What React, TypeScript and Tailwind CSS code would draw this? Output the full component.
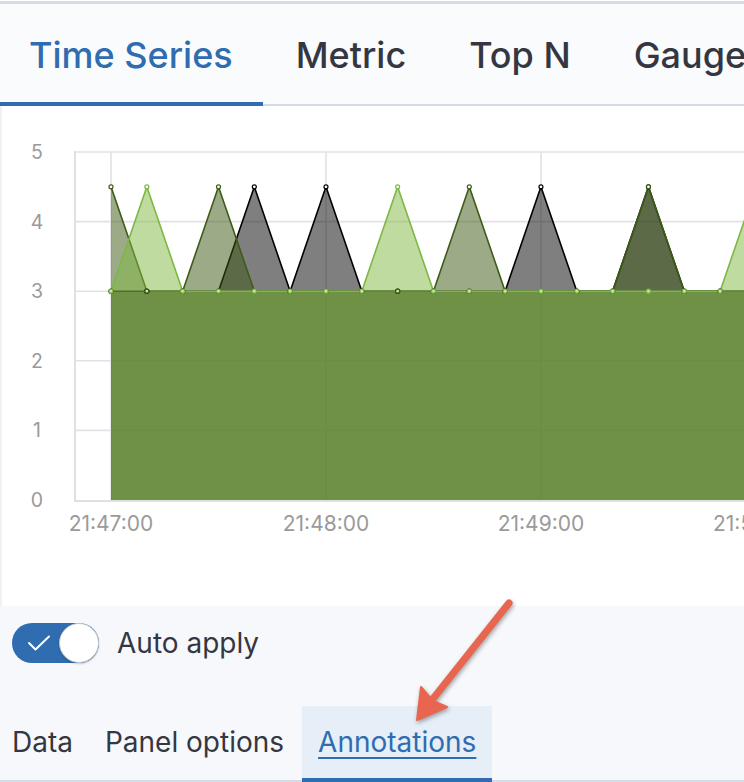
import React from "react";

const X0 = 111;
const STEP = 35.83;
const yv = (v: number) => 500 - v * 69.6;

type Series = { stroke: string; fill: string; peaks: number[] };

// drawn in this order, last on top
const series: Series[] = [
    { stroke: "#000000", fill: "#000000", peaks: [4, 6, 12, 15] },
    { stroke: "#3d5c16", fill: "#395511", peaks: [0, 3, 10, 15] },
    { stroke: "#7cb843", fill: "#7fb841", peaks: [1, 8, 18] },
];

const COUNT = 20;

const pts = (s: Series) =>
    Array.from({ length: COUNT }, (_, i) => ({
        x: X0 + i * STEP,
        y: yv(s.peaks.includes(i) ? 4.5 : 3),
        peak: s.peaks.includes(i),
    }));

const Chart = () => {
    const xTicks = [
        { x: 111, label: "21:47:00" },
        { x: 326, label: "21:48:00" },
        { x: 541, label: "21:49:00" },
        { x: 756, label: "21:50:00" },
    ];
    return (
        <svg width="742" height="500" viewBox="2 106 742 500" className="block">
            {/* grid */}
            {[5, 4, 3, 2, 1].map((v) => (
                <line key={v} x1={75} x2={800} y1={yv(v)} y2={yv(v)} stroke="#e1e2e8" strokeWidth={1.6} />
            ))}
            {xTicks.map((t) => (
                <line key={t.x} x1={t.x} x2={t.x} y1={152} y2={500} stroke="#e1e2e8" strokeWidth={1.6} />
            ))}
            <line x1={75} x2={75} y1={151} y2={501} stroke="#dfe0e6" strokeWidth={2} />
            <line x1={74} x2={800} y1={501} y2={501} stroke="#dfe0e6" strokeWidth={2} />

            {/* series areas */}
            {series.map((s, k) => {
                const p = pts(s);
                const line = p.map((q) => `${q.x},${q.y}`).join(" ");
                const area = `${X0},500 ${line} ${p[p.length - 1].x},500`;
                return (
                    <g key={k}>
                        <polygon points={area} fill={s.fill} fillOpacity={0.5} />
                        <polyline points={line} fill="none" stroke={s.stroke} strokeWidth={1.6} strokeLinejoin="round" />
                    </g>
                );
            })}
            {series.map((s, k) => (
                <g key={`d${k}`}>
                    {pts(s).map((q, i) => (
                        <circle key={i} cx={q.x} cy={q.y} r={2} fill={q.peak ? "#ffffff" : "#c9e3a8"} stroke={s.stroke} strokeWidth={1.2} />
                    ))}
                </g>
            ))}

            {/* labels */}
            {[5, 4, 3, 2, 1, 0].map((v) => (
                <text key={v} x={37} y={yv(v) + 7} textAnchor="middle" fontSize={19.5} fill="#9a9a9a" fontFamily="Inter, sans-serif">
                    {v}
                </text>
            ))}
            {xTicks.map((t) => (
                <text key={t.x} x={t.x} y={531} textAnchor="middle" fontSize={21} fill="#9a9a9a" fontFamily="Inter, sans-serif">
                    {t.label}
                </text>
            ))}
        </svg>
    );
};

export default function App() {
    const topTabs = ["Time Series", "Metric", "Top N", "Gauge"];
    return (
        <div className="relative w-[744px] h-[782px] overflow-hidden bg-white font-['Inter',sans-serif]">
            <div className="h-px bg-white" />
            {/* visualization type tabs */}
            <div className="flex gap-[3px] h-[105px] border-t-[3px] border-b-2 border-[#d5dbe6] bg-[#fafbfd] whitespace-nowrap">
                {topTabs.map((t, i) => (
                    <div
                        key={t}
                        className={`flex items-center h-[102px] -mb-0.5 pt-[3px] px-[30px] text-[36px] font-medium border-b-4 ${
                            i === 0 ? "pl-[29px] border-[#2f6cb0] text-[#2f6cb0]" : "border-transparent text-[#343741]"
                        }`}
                    >
                        {t}
                    </div>
                ))}
            </div>

            {/* chart */}
            <div className="h-[500px] border-l-2 border-[#eff1f4] bg-white">
                <Chart />
            </div>

            {/* editor footer */}
            <div className="h-[176px] bg-[#f7f8fc] flex flex-col">
                <div className="flex items-center gap-[18px] pt-4 pl-3">
                    <div className="flex items-center justify-between w-[87px] h-10 rounded-full bg-[#2f6cb0]">
                        <svg width="24" height="18" viewBox="0 0 24 18" className="ml-[15px]">
                            <polyline points="2,9 8.5,15.5 22,2.5" fill="none" stroke="#ffffff" strokeWidth="2" strokeLinecap="round" strokeLinejoin="round" />
                        </svg>
                        <div className="w-10 h-10 rounded-full bg-white border border-[#c2c7d0] shadow-[0_1px_2px_rgba(0,0,0,0.2)]" />
                    </div>
                    <span className="text-[28px] text-[#343741]">Auto apply</span>
                </div>
                <div className="mt-auto flex h-[76px] border-b-2 border-[#d5dbe6] text-[28px] whitespace-nowrap">
                    <div className="flex items-center h-[76px] -mb-0.5 pl-3 pr-4 border-b-4 border-transparent text-[#343741]">Data</div>
                    <div className="flex items-center h-[76px] -mb-0.5 pl-4 pr-[18px] border-b-4 border-transparent text-[#343741]">Panel options</div>
                    <div className="flex items-center h-[76px] -mb-0.5 px-4 border-b-4 border-[#2f6cb0] bg-[#e6eef7] text-[#2f6cb0] underline underline-offset-[5px] decoration-2">
                        Annotations
                    </div>
                </div>
            </div>

            {/* callout arrow */}
            <svg
                className="absolute left-0 top-0 pointer-events-none drop-shadow-[1px_2px_2px_rgba(0,0,0,0.35)]"
                width="744"
                height="782"
            >
                <line x1={509} y1={603} x2={428} y2={705} stroke="#e8654f" strokeWidth={7} strokeLinecap="round" />
                <polygon points="417,720 421,687 433,701 447,707" fill="#e8654f" stroke="#e8654f" strokeWidth={2} strokeLinejoin="round" />
            </svg>
        </div>
    );
}
